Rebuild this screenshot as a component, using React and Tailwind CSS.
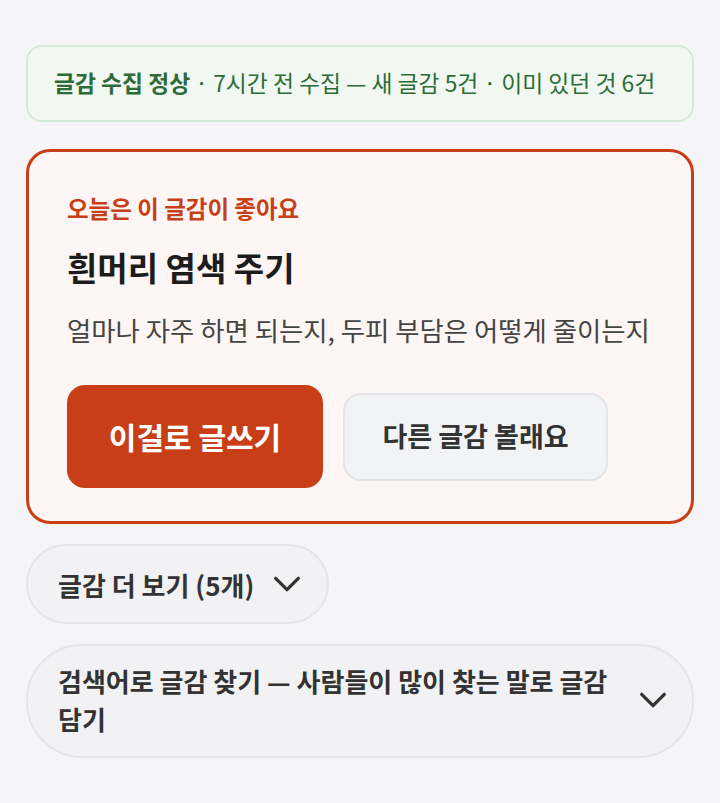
import React from 'react';

const Chevron = () => (
    <svg xmlns="http://www.w3.org/2000/svg" fill="none" viewBox="0 0 24 24" strokeWidth={2.3} stroke="currentColor" className="w-[34px] h-[34px] shrink-0">
        <path strokeLinecap="round" strokeLinejoin="round" d="m4 8 8 8 8-8" />
    </svg>
);

const App = () => {
    return (
        <div
            className="min-h-[803px] bg-[#f5f5f7] px-[26px] pt-[45px] pb-10 flex flex-col"
            style={{ fontFamily: '"Noto Sans CJK KR", "Noto Sans", sans-serif' }}
        >
            {/* Status banner */}
            <div className="h-[77px] rounded-[16px] border-2 border-[#d3ebd6] bg-[#f0f8f1] px-[26px] flex items-center text-[22.8px] text-[#2e6b38] whitespace-nowrap">
                <span><span className="font-bold">글감 수집 정상</span> · 7시간 전 수집 — 새 글감 5건 · 이미 있던 것 6건</span>
            </div>

            {/* Recommendation card */}
            <div className="mt-[27px] rounded-[24px] border-[3px] border-[#c83f17] bg-[#fdf6f4] px-[38px] pt-[39px] pb-[33px] flex flex-col">
                <div className="text-[23.5px] font-bold text-[#c83f17] leading-[34px]">오늘은 이 글감이 좋아요</div>
                <h1 className="mt-[20px] text-[33px] font-bold text-[#1c1c1c] leading-[44px]">흰머리 염색 주기</h1>
                <p className="mt-[23px] text-[26.4px] text-[#444] leading-[36px] whitespace-nowrap">얼마나 자주 하면 되는지, 두피 부담은 어떻게 줄이는지</p>
                <div className="mt-[37px] flex items-center gap-[20px]">
                    <button className="w-[256px] h-[103px] rounded-[18px] bg-[#c83f17] text-white text-[30px] font-bold">
                        이걸로 글쓰기
                    </button>
                    <button className="w-[265px] h-[88px] rounded-[18px] border-2 border-[#e3e5e8] bg-[#f2f3f5] text-[#333] text-[27px] font-bold">
                        다른 글감 볼래요
                    </button>
                </div>
            </div>

            {/* More topics */}
            <button className="mt-[20px] self-start h-[80px] rounded-full border-2 border-[#e5e5e7] bg-[#f2f2f4] pl-[30px] pr-[23px] flex items-center gap-[16px] text-[26px] font-bold text-[#333]">
                <span>글감 더 보기 (5개)</span>
                <Chevron />
            </button>

            {/* Search keyword */}
            <button className="mt-[20px] rounded-[56px] border-2 border-[#e5e5e7] bg-[#f2f2f4] pl-[30px] pr-[22px] pt-[16px] pb-[18px] flex items-center justify-between gap-[24px] text-left text-[26px] font-bold text-[#333] leading-[38px]">
                <span>검색어로 글감 찾기 — 사람들이 많이 찾는 말로 글감 담기</span>
                <Chevron />
            </button>
        </div>
    );
};

export default App;
